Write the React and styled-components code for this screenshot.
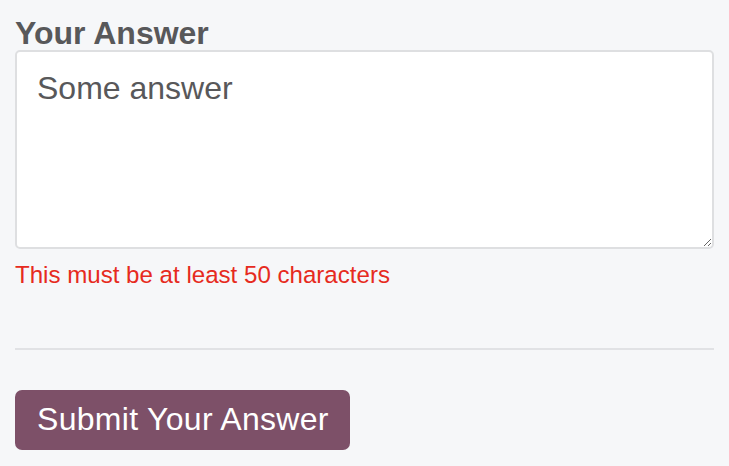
import React from 'react';
import styled, { createGlobalStyle } from 'styled-components';

const GlobalStyle = createGlobalStyle`
  html, body {
    margin: 0;
    padding: 0;
    background: #f6f7f9;
  }
  body {
    font-family: "Liberation Sans", Arial, sans-serif;
  }
`;

const Form = styled.form`
  padding: 17px 15px 20px;
  display: flex;
  flex-direction: column;
`;

const Label = styled.label`
  font-size: 32px;
  font-weight: 700;
  color: #58585a;
  line-height: 33px;
`;

const TextArea = styled.textarea`
  display: block;
  box-sizing: border-box;
  width: 100%;
  height: 199px;
  padding: 18px 20px 14px;
  border: 2px solid #dedfe1;
  border-radius: 5px;
  background: #fff;
  font-family: "Liberation Sans", Arial, sans-serif;
  font-size: 32px;
  line-height: 1.15;
  color: #58585a;
  outline: none;
  resize: vertical;
`;

const ErrorText = styled.div`
  margin-top: 12px;
  font-size: 24.1px;
  line-height: 1.15;
  color: #e62a20;
`;

const Divider = styled.hr`
  margin: 59px 0 40px;
  border: 0;
  border-top: 2px solid #e1e2e5;
`;

const SubmitButton = styled.button`
  align-self: flex-start;
  height: 60px;
  padding: 0 21px 0 22px;
  border: 0;
  border-radius: 7px;
  background: #7d5068;
  color: #fff;
  font-family: "Liberation Sans", Arial, sans-serif;
  font-size: 32px;
  letter-spacing: 0.3px;
  cursor: pointer;
`;

const App = () => (
  <>
    <GlobalStyle />
    <Form onSubmit={e => e.preventDefault()}>
      <Label htmlFor="answer">Your Answer</Label>
      <TextArea id="answer" defaultValue="Some answer" />
      <ErrorText>This must be at least 50 characters</ErrorText>
      <Divider />
      <SubmitButton type="submit">Submit Your Answer</SubmitButton>
    </Form>
  </>
);

export default App;
